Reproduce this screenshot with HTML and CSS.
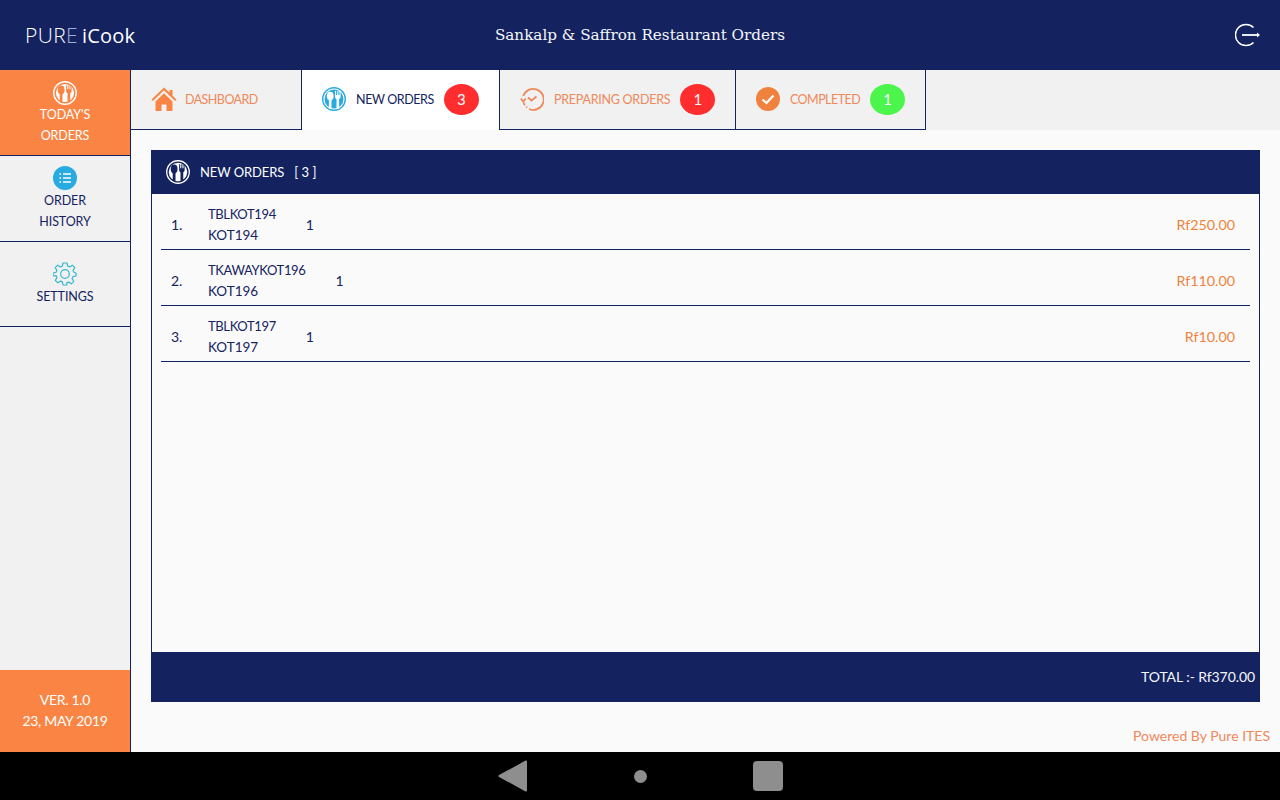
FILE: index.html
```html
<!DOCTYPE html>
<html lang="en">
<head>
<meta charset="utf-8">
<title>Sankalp &amp; Saffron Restaurant Orders</title>
<link rel="stylesheet" href="styles.css">
</head>
<body>
<div class="app">
  <header class="topbar">
    <div class="logo"><span class="logo-pure">PUR<span class="logo-e">E</span></span><span class="logo-icook">iCook</span></div>
    <h1 class="title">Sankalp &amp; Saffron Restaurant Orders</h1>
    <svg class="logout" width="26" height="24" viewBox="0 0 26 24"><path d="M18.500 4.500A10.600 10.600 0 1 0 18.500 19.500" fill="none" stroke="#fff" stroke-width="1.500"/><path d="M7 12h16" stroke="#fff" stroke-width="1.800"/><path d="M22 9.500 25 12l-3 2.500z" fill="#fff"/></svg>
  </header>
  <div class="main">
    <aside class="sidebar">
      <a class="side-item active">
        <svg class="side-icon" width="24" height="24" viewBox="0 0 26 26"><circle cx="13" cy="13" r="12.200" fill="none" stroke="#fff" stroke-width="1.500"/><circle cx="13" cy="13" r="9.800" fill="#fff"/><ellipse cx="8.800" cy="9.800" rx="3.700" ry="4.800" fill="#fa8443"/><path d="M8.800 12v11" stroke="#fa8443" stroke-width="3"/><path d="M14.200 4.500v6a3 3 0 0 0 6 0v-6h-1.200v4.500h-1.200V4.500h-1.200V9h-1.200V4.500z" fill="#fa8443"/><path d="M17.200 12v11" stroke="#fa8443" stroke-width="3"/></svg>
        <span>TODAY'S</span><span>ORDERS</span>
      </a>
      <a class="side-item">
        <svg class="side-icon" width="24" height="24" viewBox="0 0 24 24"><circle cx="12" cy="12" r="12" fill="#29abe2"/><path d="M10 8h8M10 12h8M10 16h8" stroke="#fff" stroke-width="1.300"/><path d="M6.500 8h1.500M6.500 12h1.500M6.500 16h1.500" stroke="#fff" stroke-width="1.300"/></svg>
        <span>ORDER</span><span>HISTORY</span>
      </a>
      <a class="side-item settings">
        <svg class="side-icon" width="24" height="24" viewBox="0 0 24 24" fill="none" stroke="#35b8d0" stroke-width="1.200"><path d="M10 1h4l.7 3.100 1.900.8 2.700-1.700 2.500 2.500-1.700 2.700.8 1.900L23 11v3l-3.100.7-.8 1.900 1.700 2.700-2.500 2.500-2.700-1.700-1.900.8L13.900 23h-3.800l-.7-3.100-1.900-.8-2.700 1.700-2.500-2.500 1.700-2.700-.8-1.900L0 14v-3l3.100-.7.8-1.900-1.700-2.700 2.500-2.500 2.700 1.700 1.900-.8z" stroke-linejoin="round"/><circle cx="12" cy="12" r="4.300"/></svg>
        <span>SETTINGS</span>
      </a>
      <div class="side-footer"><span>VER. 1.0</span><span>23, MAY 2019</span></div>
    </aside>
    <section class="content">
      <nav class="tabs">
        <a class="tab tab-dashboard">
          <svg width="26" height="24" viewBox="0 0 26 24"><path d="M13 .5 .5 12.500l1.400 1.400L13 3.300l11.100 10.600 1.400-1.400-4-3.800V3h-3v2.500z" fill="#fa8443"/><path d="M4.500 14.500 13 6.300l8.500 8.200V24h-6v-6.500h-5V24h-6z" fill="#fa8443"/></svg>
          <span>DASHBOARD</span>
        </a>
        <a class="tab tab-new current">
          <svg width="24" height="24" viewBox="0 0 24 24"><circle cx="12" cy="12" r="11.300" fill="#fff" stroke="#29abe2" stroke-width="1.400"/><circle cx="12" cy="12" r="9.500" fill="#29abe2"/><ellipse cx="8.200" cy="9" rx="3.400" ry="4.300" fill="#fff"/><path d="M8.200 11v11" stroke="#fff" stroke-width="2.600"/><path d="M13 4v5.500a2.800 2.800 0 0 0 5.600 0V4h-1.100v4h-1.100V4h-1.100v4h-1.200V4z" fill="#fff"/><path d="M15.800 11v11" stroke="#fff" stroke-width="2.600"/></svg>
          <span>NEW ORDERS</span><b class="badge red">3</b>
        </a>
        <a class="tab tab-preparing">
          <svg width="24" height="24" viewBox="0 0 24 24" fill="none" stroke="#f0885a" stroke-width="1.800"><path d="M3.300 9A10.500 10.500 0 1 1 9 22"/><path d="M.8 11.500l2.400 3 2.600-3"/><path d="M3.500 15.500c.3 1 .8 2 1.400 2.800M6.300 19.800l.9.700"/><path d="M8 10.500l3.500 3 5-4"/></svg>
          <span>PREPARING ORDERS</span><b class="badge red">1</b>
        </a>
        <a class="tab tab-completed">
          <svg width="24" height="24" viewBox="0 0 24 24"><circle cx="12" cy="12" r="12" fill="#f0823d"/><path d="M6.500 12.500l4 3.500 7-7.500" fill="none" stroke="#fff" stroke-width="2.200"/></svg>
          <span>COMPLETED</span><b class="badge green">1</b>
        </a>
      </nav>
      <div class="body-area">
        <div class="panel">
          <div class="panel-head">
            <svg width="24" height="24" viewBox="0 0 26 26"><circle cx="13" cy="13" r="12.200" fill="none" stroke="#fff" stroke-width="1.400"/><circle cx="13" cy="13" r="10" fill="#fff"/><ellipse cx="8.800" cy="9.800" rx="3.700" ry="4.800" fill="#14235f"/><path d="M8.800 12v11" stroke="#14235f" stroke-width="3"/><path d="M14.200 4.500v6a3 3 0 0 0 6 0v-6h-1.200v4.500h-1.200V4.500h-1.200V9h-1.200V4.500z" fill="#14235f"/><path d="M17.200 12v11" stroke="#14235f" stroke-width="3"/></svg>
            <span class="panel-title">NEW ORDERS</span><span class="panel-count">[ 3 ]</span>
          </div>
          <div class="rows">
            <div class="row"><span class="num">1.</span><div class="names"><span class="code">TBLKOT194</span><span class="kot">KOT194</span></div><span class="qty">1</span><span class="price">Rf250.00</span></div>
            <div class="row"><span class="num">2.</span><div class="names"><span class="code">TKAWAYKOT196</span><span class="kot">KOT196</span></div><span class="qty">1</span><span class="price">Rf110.00</span></div>
            <div class="row"><span class="num">3.</span><div class="names"><span class="code">TBLKOT197</span><span class="kot">KOT197</span></div><span class="qty">1</span><span class="price">Rf10.00</span></div>
          </div>
          <div class="panel-foot">TOTAL :- Rf370.00</div>
        </div>
        <p class="powered">Powered By Pure ITES</p>
      </div>
    </section>
  </div>
  <footer class="navbar">
    <svg width="32" height="36" viewBox="0 0 32 36"><path d="M29 3.500V32.500L2.500 18z" fill="#8e8e8e" stroke="#8e8e8e" stroke-width="2" stroke-linejoin="round"/></svg>
    <span class="nav-dot"></span>
    <span class="nav-square"></span>
  </footer>
</div>
</body>
</html>
```
FILE: styles.css
```css
* { box-sizing: border-box; }
html, body { margin: 0; padding: 0; }
body { font-family: "Lato", "Open Sans", sans-serif; color: #14235f; background: #fafafa; }
.app { width: 1280px; height: 800px; display: flex; flex-direction: column; overflow: hidden; }

.topbar { height: 70px; flex: none; background: #14235f; display: flex; align-items: center; justify-content: space-between; padding: 0 19px 0 25px; position: relative; }
.logo { display: flex; align-items: baseline; color: #fff; font-family: "Open Sans", sans-serif; font-weight: 300; font-size: 20px; }
.logo-pure { font-size: 21px; margin-right: 4px; letter-spacing: .4px; }
.logo-e { color: #9db0dc; }
.logo-icook { font-weight: 400; letter-spacing: .2px; }
.title { position: absolute; left: 0; right: 0; margin: 0; text-align: center; color: #f4f6fb; font-family: "DejaVu Serif", serif; font-weight: 400; font-size: 15.200px; pointer-events: none; }
.logout { position: relative; }

.main { flex: 1; display: flex; min-height: 0; }
.sidebar { width: 131px; flex: none; background: #f1f1f1; border-right: 1px solid #14235f; display: flex; flex-direction: column; }
.side-item { height: 86px; flex: none; border-bottom: 1px solid #14235f; display: flex; flex-direction: column; align-items: center; padding-top: 10px; font-size: 12.500px; letter-spacing: -.1px; line-height: 21px; color: #14235f; }
.side-item.active { background: #fa8443; color: #fff; padding-top: 11px; }
.side-item.active .side-icon { margin-bottom: -1px; }
.side-item.settings { height: 85px; padding-top: 20px; }
.side-footer { margin-top: auto; height: 82px; background: #fa8443; color: #fff; display: flex; flex-direction: column; align-items: center; justify-content: center; padding-bottom: 2px; font-size: 14px; letter-spacing: -.3px; line-height: 21px; }

.content { flex: 1; display: flex; flex-direction: column; min-width: 0; }
.tabs { height: 60px; flex: none; display: flex; background: #f1f1f1; }
.tab { height: 60px; display: flex; align-items: center; background: #f1f1f1; border-right: 1px solid #14235f; border-bottom: 1px solid #14235f; color: #f0885a; font-size: 12.500px; letter-spacing: -.55px; padding: 0 0 1px 20px; }
.tab svg { flex: none; }
.tab-dashboard { width: 171px; }
.tab-dashboard span { margin-left: 8px; }
.tab-new { width: 198px; background: #fff; color: #14235f; border-bottom: 0; padding-bottom: 2px; letter-spacing: -.4px; }
.tab-new span { margin-left: 10px; }
.tab-preparing { width: 236px; letter-spacing: -.25px; }
.tab-preparing span { margin-left: 10px; }
.tab-completed { width: 190px; }
.tab-completed span { margin-left: 10px; }
.badge { width: 35px; height: 31px; border-radius: 50%; margin-left: 10px; display: flex; align-items: center; justify-content: center; color: #fff; font-weight: 400; font-size: 15px; letter-spacing: 0; }
.red { background: #ff2d2d; }
.green { background: #4cf54c; }

.body-area { flex: 1; min-height: 0; background: #fafafa; padding: 20px 10px 0 20px; display: flex; flex-direction: column; }
.panel { width: 1109px; height: 552px; flex: none; display: flex; flex-direction: column; border-left: 1px solid #14235f; border-right: 1px solid #14235f; }
.panel-head { height: 44px; flex: none; margin: 0 -1px; background: #14235f; color: #fff; display: flex; align-items: center; padding: 0 0 1px 15px; font-size: 13px; }
.panel-title { margin-left: 10px; letter-spacing: -.1px; }
.panel-count { margin-left: 10px; font-size: 13px; }
.rows { flex: 1; padding: 0 9px; }
.row { height: 56px; border-bottom: 1px solid #14235f; display: flex; align-items: center; padding: 5px 15px 0 10px; font-size: 14px; }
.num { width: 37px; flex: none; }
.names { display: flex; flex-direction: column; line-height: 21px; margin-top: 2px; }
.code { font-size: 13px; letter-spacing: -.36px; }
.kot { font-size: 13.500px; }
.qty { margin-left: 30px; }
.price { margin-left: auto; color: #f0823d; font-size: 14.300px; }
.panel-foot { height: 50px; flex: none; margin: 0 -1px; background: #14235f; color: #f4f6fb; display: flex; align-items: center; justify-content: flex-end; padding: 0 5px 2px 0; font-size: 14px; letter-spacing: -.08px; }
.powered { margin: 24px 0 0; text-align: right; color: #f0885a; font-size: 14px; line-height: 20px; }

.navbar { height: 48px; flex: none; background: #000; position: relative; display: flex; align-items: center; justify-content: center; }
.navbar svg { position: absolute; left: 497px; top: 6px; }
.nav-dot { width: 13px; height: 13px; border-radius: 50%; background: #8e8e8e; }
.nav-square { position: absolute; left: 753px; top: 9px; width: 30px; height: 30px; border-radius: 4px; background: #8e8e8e; }
```
